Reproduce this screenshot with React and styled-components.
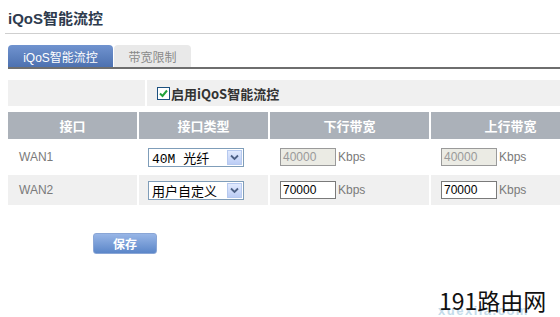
import React from "react";
import styled, { createGlobalStyle } from "styled-components";

const GlobalStyle = createGlobalStyle`
  html, body {
    margin: 0;
    padding: 0;
    background: #fff;
    overflow: hidden;
  }
  body {
    font-family: "Liberation Sans", Arial, "Noto Sans CJK SC", sans-serif;
  }
`;

const Page = styled.div`
  position: relative;
  width: 560px;
  height: 317px;
  overflow: hidden;
  padding: 9px 0 0 8px;
  box-sizing: border-box;
`;

const Title = styled.h1`
  margin: 0 0 0 -3px;
  padding: 0 0 4px 3px;
  font-size: 15px;
  font-weight: bold;
  line-height: 20px;
  color: #2e3b4e;
  border-bottom: 1px solid #cfcfcf;
`;

const Tabs = styled.div`
  display: flex;
  gap: 1px;
  margin-top: 11px;
  border-bottom: 2px solid #6e6e6e;
  height: 22px;
`;

const Tab = styled.div`
  width: ${(p) => p.w}px;
  height: 22px;
  display: flex;
  align-items: center;
  justify-content: center;
  font-size: 12px;
  font-family: "Liberation Sans", "Noto Sans CJK SC", sans-serif;
  border-radius: 4px 4px 0 0;
  color: ${(p) => (p.active ? "#fff" : "#8a8a8a")};
  background: ${(p) =>
    p.active ? "linear-gradient(#7093cf, #4d71b0)" : "#e9e9e9"};
`;

const EnableRow = styled.div`
  display: grid;
  grid-template-columns: 137px 1fr;
  gap: 2px;
  margin-top: 11px;
  height: 26px;
`;

const Shade = styled.div`
  background: #f0f0f0;
  display: flex;
  align-items: center;
`;

const CheckLabel = styled.label`
  display: flex;
  align-items: center;
  margin-left: 10px;
  font-size: 13px;
  font-weight: bold;
  color: #333;
  font-family: "Noto Sans CJK SC", sans-serif;
`;

const Box = styled.span`
  width: 11px;
  height: 11px;
  border: 1px solid #1c5180;
  background: #fff;
  display: inline-flex;
  align-items: center;
  justify-content: center;
  margin-right: 1px;
`;

const Grid = styled.div`
  display: grid;
  grid-template-columns: 129px 129px 159px 159px;
  column-gap: 2px;
  row-gap: 2px;
  margin-top: 6px;
`;

const Head = styled.div`
  background: #abb1b9;
  color: #fff;
  height: 27px;
  display: flex;
  align-items: center;
  justify-content: center;
  font-size: 13px;
  font-weight: bold;
  font-family: "Noto Sans CJK SC", sans-serif;
`;

const Cell = styled.div`
  background: ${(p) => (p.shade ? "#f0f0f0" : "#fff")};
  height: ${(p) => (p.shade ? 30 : 32)}px;
  display: flex;
  align-items: center;
  padding-left: ${(p) => p.pad || 0}px;
  font-size: 12px;
  color: #7a7a7a;
`;

const Select = styled.div`
  width: 94px;
  height: 17px;
  border: 1px solid #7f9db9;
  background: #fff;
  display: flex;
  align-items: center;
  justify-content: space-between;
  box-sizing: content-box;
`;

const SelectText = styled.span`
  font-size: 13px;
  color: #000;
  padding-left: 3px;
  font-family: "Liberation Mono", "Noto Sans CJK SC", monospace;
`;

const Arrow = styled.span`
  width: 15px;
  height: 15px;
  margin-right: 1px;
  border: 1px solid #b6c9ef;
  box-sizing: border-box;
  background: linear-gradient(#e1eafe, #bccdf5);
  display: flex;
  align-items: center;
  justify-content: center;
`;

const Input = styled.div`
  width: 52px;
  height: 16px;
  border: 1px solid ${(p) => (p.disabled ? "#9a9a9a" : "#7a7a7a")};
  background: ${(p) => (p.disabled ? "#ebebe4" : "#fff")};
  color: ${(p) => (p.disabled ? "#9a9a9a" : "#000")};
  font-size: 12px;
  line-height: 16px;
  padding-left: 2px;
  margin-right: 2px;
  box-sizing: content-box;
`;

const SaveButton = styled.button`
  margin: 28px 0 0 85px;
  width: 64px;
  height: 21px;
  border: 1px solid #8aa6d6;
  border-radius: 3px;
  background: linear-gradient(#98b6e6, #5b86c9);
  color: #fff;
  font-size: 12px;
  font-weight: bold;
  font-family: "Noto Sans CJK SC", sans-serif;
  padding: 0;
`;

const Watermark = styled.div`
  position: absolute;
  left: 436px;
  top: 287px;
  width: 120px;
  height: 30px;
`;

const Site = styled.span`
  position: absolute;
  left: 2px;
  top: 17px;
  font-size: 13px;
  line-height: 13px;
  letter-spacing: 1.5px;
  color: #c4dbea;
  font-weight: bold;
`;

const Mark = styled.span`
  position: absolute;
  left: 3px;
  top: 0;
  font-size: 23px;
  line-height: 26px;
  color: #111;
  font-family: "Noto Sans CJK SC", sans-serif;
`;

const Chevron = () => (
  <svg width="9" height="7" viewBox="0 0 9 7">
    <path d="M1 1.5 L4.5 5 L8 1.5" fill="none" stroke="#4d6185" strokeWidth="1.8" />
  </svg>
);

const Check = () => (
  <svg width="9" height="9" viewBox="0 0 9 9">
    <path d="M1 4.5 L3.5 7 L8 1.5" fill="none" stroke="#22a23a" strokeWidth="2" />
  </svg>
);

const rows = [
  { name: "WAN1", type: "40M 光纤", down: "40000", up: "40000", disabled: true },
  { name: "WAN2", type: "用户自定义", down: "70000", up: "70000", disabled: false },
];

const App = () => (
  <Page>
    <GlobalStyle />
    <Title>iQoS智能流控</Title>
    <Tabs>
      <Tab active w={105}>iQoS智能流控</Tab>
      <Tab w={77}>带宽限制</Tab>
    </Tabs>
    <EnableRow>
      <Shade />
      <Shade>
        <CheckLabel>
          <Box><Check /></Box>启用iQoS智能流控
        </CheckLabel>
      </Shade>
    </EnableRow>
    <Grid>
      <Head>接口</Head>
      <Head>接口类型</Head>
      <Head>下行带宽</Head>
      <Head>上行带宽</Head>
      {rows.map((r, i) => (
        <React.Fragment key={r.name}>
          <Cell shade={i === 1} pad={11}>{r.name}</Cell>
          <Cell shade={i === 1} pad={9}>
            <Select>
              <SelectText>{r.type}</SelectText>
              <Arrow><Chevron /></Arrow>
            </Select>
          </Cell>
          <Cell shade={i === 1} pad={10}>
            <Input disabled={r.disabled}>{r.down}</Input>Kbps
          </Cell>
          <Cell shade={i === 1} pad={10}>
            <Input disabled={r.disabled}>{r.up}</Input>Kbps
          </Cell>
        </React.Fragment>
      ))}
    </Grid>
    <SaveButton>保存</SaveButton>
    <Watermark>
      <Site>xuexila.com</Site>
      <Mark>191路由网</Mark>
    </Watermark>
  </Page>
);

export default App;
